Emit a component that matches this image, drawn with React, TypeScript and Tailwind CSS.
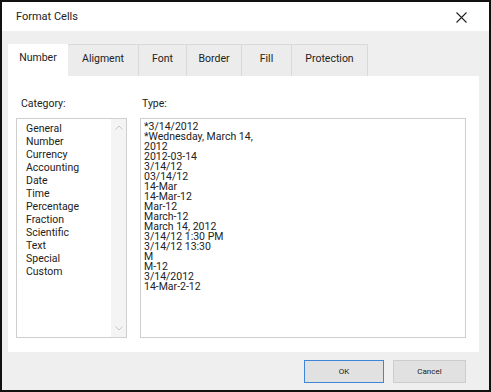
import React from "react";

const categories = ["General","Number","Currency","Accounting","Date","Time","Percentage","Fraction","Scientific","Text","Special","Custom"];
const types = ["*3/14/2012","*Wednesday, March 14, 2012","2012-03-14","3/14/12","03/14/12","14-Mar","14-Mar-12","Mar-12","March-12","March 14, 2012","3/14/12 1:30 PM","3/14/12 13:30","M","M-12","3/14/2012","14-Mar-2-12"];
const tabs = [
  { label: "Number", w: "w-[60px]" },
  { label: "Aligment", w: "w-[71px]" },
  { label: "Font", w: "w-[48px]" },
  { label: "Border", w: "w-[55px]" },
  { label: "Fill", w: "w-[50px]" },
  { label: "Protection", w: "w-[76px]" },
];

export default function App() {
  return (
    <div className="w-[491px] h-[392px] border-2 border-[#111] bg-[#efefef] flex flex-col text-[#222]" style={{ fontFamily: "Roboto, 'Liberation Sans', sans-serif" }}>
      <div className="h-[29px] bg-white flex items-center justify-between pl-[14px] pr-[22px] shrink-0">
        <span className="text-[11px] mt-[1px]">Format Cells</span>
        <svg width="11" height="11" viewBox="0 0 11 11" className="mt-[1px]">
          <path d="M0.5 0.5 L10.5 10.5 M10.5 0.5 L0.5 10.5" stroke="#222" strokeWidth="1.1" fill="none" />
        </svg>
      </div>
      <div className="flex-1 flex flex-col pt-[13px] px-[6px]">
        <div className="flex h-[32px] items-stretch">
          {tabs.map((t, i) => (
            <div
              key={t.label}
              className={`${t.w} flex items-center justify-center pb-[4px] text-[10.5px] ${i === 0 ? "bg-white" : "bg-[#ececec] border-t border-r border-[#d9d9d9]"}`}
            >
              {t.label}
            </div>
          ))}
        </div>
        <div className="w-[471px] h-[276px] bg-white flex gap-[13px] px-[8px] pt-[20px]">
          <div className="flex flex-col">
            <div className="text-[10.5px] pl-[5px] h-[22px]">Category:</div>
            <div className="w-[111px] h-[220px] border border-[#cfcfcf] flex">
              <div className="flex-1 pl-[9px] pt-[3px] text-[10.5px] leading-[13px]">
                {categories.map((c) => (
                  <div key={c}>{c}</div>
                ))}
              </div>
              <div className="w-[15px] bg-[#f4f4f4] flex flex-col items-center justify-between py-[6px]">
                <svg width="8" height="5" viewBox="0 0 8 5"><path d="M0.5 4.5 L4 1 L7.5 4.5" stroke="#c8c8c8" fill="none" strokeWidth="1" /></svg>
                <svg width="8" height="5" viewBox="0 0 8 5"><path d="M0.5 0.5 L4 4 L7.5 0.5" stroke="#c8c8c8" fill="none" strokeWidth="1" /></svg>
              </div>
            </div>
          </div>
          <div className="flex flex-col">
            <div className="text-[10.5px] pl-[2px] h-[22px]">Type:</div>
            <div className="w-[326px] h-[220px] border border-[#cfcfcf] pl-[3px] pt-[3px]">
              <div className="w-[112px] text-[10.5px] leading-[10px]">
                {types.map((t) => (
                  <div key={t}>{t}</div>
                ))}
              </div>
            </div>
          </div>
        </div>
        <div className="flex justify-end gap-[9px] pt-[8px] pr-[17px]">
          <div className="w-[80px] h-[23px] bg-[#e1e1e1] border-[1.5px] border-[#3d86d8] flex items-center justify-center text-[8px]">OK</div>
          <div className="w-[73px] h-[23px] bg-[#e1e1e1] border border-[#cdcdcd] flex items-center justify-center text-[8px]">Cancel</div>
        </div>
      </div>
    </div>
  );
}
